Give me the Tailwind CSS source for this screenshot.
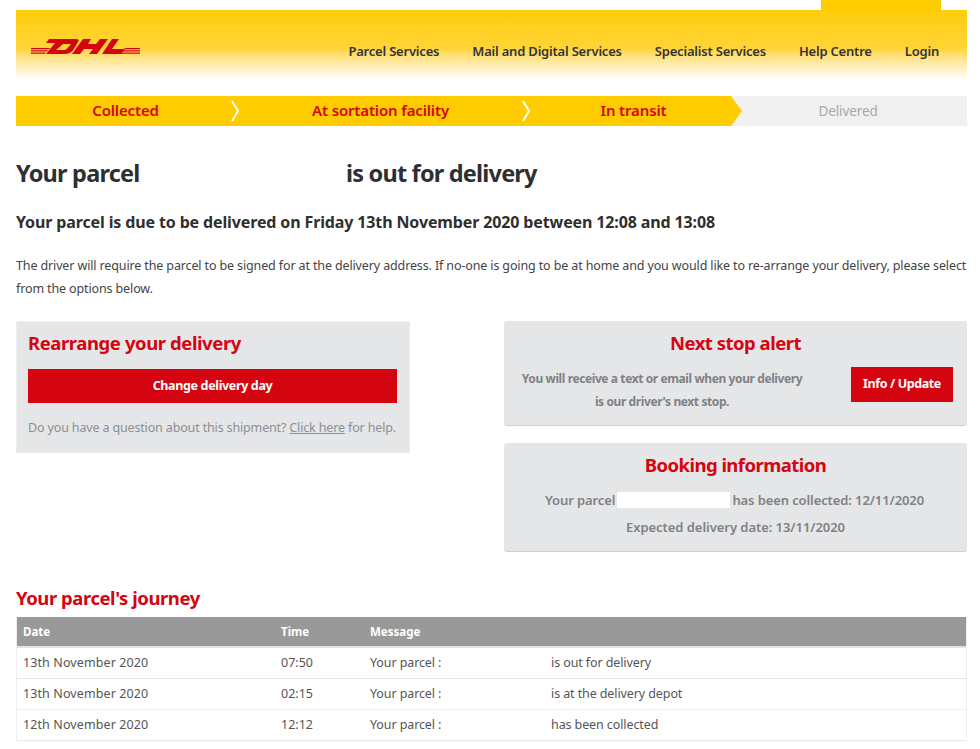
<!DOCTYPE html>
<html lang="en"><head><meta charset="utf-8"><script src="https://cdn.jsdelivr.net/npm/@tailwindcss/browser@4"></script></head>
<body class="bg-white overflow-hidden font-['Noto_Sans',sans-serif] text-[#333]">
<div class="w-[951px] ml-4 h-[749px]">
  <header class="relative top-2.5 h-[70px] mb-2.5 bg-linear-to-b from-[#ffcc00] via-[#ffd535] via-55% to-white flex items-end justify-between pb-[20px]">
    <div class="absolute right-[26px] -top-2.5 w-[120px] h-2.5 bg-[#ffcc00]"></div>
    <svg class="absolute left-[15px] top-[29px]" width="110" height="15" viewBox="0 0 110 15" aria-label="DHL logo"><g fill="#d40511">
      <path fill-rule="evenodd" d="M18 0H45Q49 0 47 3L43 10Q40 15 33 15H15L24 4H15ZM32 5L25 11H33Q35 11 37 8.500L40 5Z"/>
      <path d="M52 0H60L57 5H65L69 0H77L66 15H58L62 10H53L49 15H41Z"/>
      <path d="M81 0H88L81 10H94L90 15H71Z"/>
      <path d="M0 9H19L18 10.200H0ZM0 11.300H17L16 12.500H0ZM0 13.600H15L14 14.800H0ZM94 9H109V10.200H93ZM92 11.300H109V12.500H91ZM90 13.600H109V14.800H89Z"/></g></svg>
    <nav class="ml-auto flex gap-[33px] pr-[28px] text-[13px] font-semibold text-[#333] tracking-[-0.2px] leading-[18px]">
      <a>Parcel Services</a><a>Mail and Digital Services</a><a>Specialist Services</a><a>Help Centre</a><a>Login</a>
    </nav>
  </header>
  <div class="mt-[26px] h-[30px] flex bg-[#f0f0f0] text-[15px] leading-[29px] font-semibold tracking-[-0.15px] text-[#d40511] text-center">
    <div class="w-[219px] bg-[#ffcc00] relative">Collected<svg class="absolute z-10 right-[-5px] top-[4px]" width="10" height="22" viewBox="0 0 10 22"><path d="M2 1L8 11L2 21" fill="none" stroke="#fff" stroke-width="2"/></svg></div>
    <div class="w-[291px] bg-[#ffcc00] relative">At sortation facility<svg class="absolute z-10 right-[-5px] top-[4px]" width="10" height="22" viewBox="0 0 10 22"><path d="M2 1L8 11L2 21" fill="none" stroke="#fff" stroke-width="2"/></svg></div>
    <div class="w-[216px] pr-[1px] bg-[#ffcc00] [clip-path:polygon(0_0,205px_0,216px_15px,205px_30px,0_30px)]">In transit</div>
    <div class="w-[225px] pr-[13px] pt-px text-[#a8a8a8] font-normal text-[13.5px] tracking-[-0.1px]">Delivered</div>
  </div>
  <h1 class="mt-[29px] text-[23.5px] leading-[36px] font-bold text-[#2f2f2f] tracking-[-0.8px] flex"><span class="w-[330px]">Your parcel</span><span>is out for delivery</span></h1>
  <h2 class="mt-[18px] text-[16px] leading-[26px] font-bold text-[#2f2f2f] tracking-[-0.13px]">Your parcel is due to be delivered on Friday 13th November 2020 between 12:08 and 13:08</h2>
  <p class="mt-[19px] text-[12.5px] leading-[23px] text-[#444] tracking-[-0.13px]">The driver will require the parcel to be signed for at the delivery address. If no-one is going to be at home and you would like to re-arrange your delivery, please select from the options below.</p>
  <div class="mt-[21px] flex justify-between items-start h-[262px]">
    <section class="w-[394px] h-[132px] bg-[#e5e6e8] border border-[#eceded] px-[11px] pt-[7px]">
      <h3 class="text-[18.5px] leading-[28px] font-bold text-[#d40511] tracking-[-0.42px]">Rearrange your delivery</h3>
      <button class="mt-[12px] w-[369px] h-[34px] bg-[#d40511] text-white text-[12.5px] font-bold tracking-[-0.35px] block">Change delivery day</button>
      <p class="mt-[15px] text-[12.5px] leading-[20px] text-[#8c8f93] tracking-[-0.15px] whitespace-nowrap">Do you have a question about this shipment? <a class="underline">Click here</a> for help.</p>
    </section>
    <div class="w-[463px] flex flex-col gap-[17px]">
      <section class="h-[105px] bg-[#e5e6e8] border-b border-[#cfd0d2] rounded-[3px] relative pt-[8px]">
        <h3 class="text-center text-[18.5px] leading-[28px] font-bold text-[#d40511] tracking-[-0.5px]">Next stop alert</h3>
        <div class="flex items-start">
          <p class="w-[316px] mt-[10px] text-center text-[12px] leading-[23px] font-bold text-[#808184] tracking-[-0.4px]">You will receive a text or email when your delivery<br>is our driver's next stop.</p>
          <button class="ml-auto mr-3.5 mt-[10px] w-[102px] h-[35px] bg-[#d40511] text-white text-[12.5px] font-bold tracking-[-0.4px]">Info / Update</button>
        </div>
      </section>
      <section class="h-[109px] bg-[#e5e6e8] border-b border-[#cfd0d2] rounded-[3px] pt-[8px] text-center">
        <h3 class="text-[18.5px] leading-[28px] font-bold text-[#d40511] tracking-[-0.55px]">Booking information</h3>
        <p class="mt-[10px] text-[13px] leading-[22px] font-semibold text-[#808184] tracking-[-0.1px] flex justify-center items-center"><span>Your parcel</span><span class="w-[113px] h-4 bg-white mx-[2px]"></span><span class="mr-[2px]">has been collected: 12/11/2020</span></p>
        <p class="mt-[5px] text-[13px] leading-[22px] font-semibold text-[#808184] tracking-[-0.05px]">Expected delivery date: 13/11/2020</p>
      </section>
    </div>
  </div>
  <h2 class="text-[18.5px] leading-[28px] font-bold text-[#d40511] mt-[1px] tracking-[-0.45px]">Your parcel's journey</h2>
  <div class="mt-[5px] border-x border-[#eee] text-[12.5px] text-[#555]">
    <div class="h-[31px] grid grid-cols-[258px_89px_181px_1fr] bg-[#999] border-b-2 border-[#e3e3e3] pl-[6px] pt-px items-center text-white font-bold text-[11.5px]"><span>Date</span><span>Time</span><span>Message</span><span></span></div>
    <div class="h-[31px] grid grid-cols-[258px_89px_181px_1fr] border-b border-[#e6e6e6] pl-[6px] pt-px items-center"><span class="tracking-[0.1px]">13th November 2020</span><span>07:50</span><span class="tracking-[-0.1px]">Your parcel :</span><span class="tracking-[-0.1px]">is out for delivery</span></div>
    <div class="h-[31px] grid grid-cols-[258px_89px_181px_1fr] border-b border-[#eee] pl-[6px] items-center"><span class="tracking-[0.1px]">13th November 2020</span><span>02:15</span><span class="tracking-[-0.1px]">Your parcel :</span><span class="tracking-[-0.1px]">is at the delivery depot</span></div>
    <div class="h-[31px] grid grid-cols-[258px_89px_181px_1fr] border-b border-[#e6e6e6] pl-[6px] items-center"><span class="tracking-[0.1px]">12th November 2020</span><span>12:12</span><span class="tracking-[-0.1px]">Your parcel :</span><span class="tracking-[-0.1px]">has been collected</span></div>
  </div>
</div>
</body></html>
